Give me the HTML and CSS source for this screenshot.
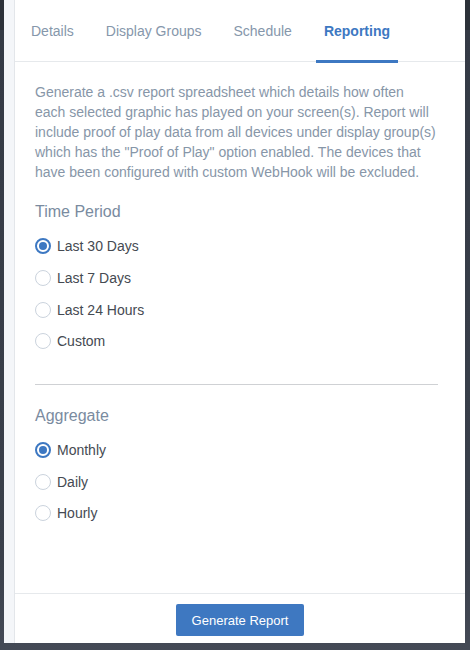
FILE: index.html
```html
<!DOCTYPE html>
<html>
<head>
<meta charset="utf-8">
<link rel="stylesheet" href="styles.css">
</head>
<body>
<div class="stage">
  <div class="panel">
    <div class="strip"></div>
    <div class="main">
      <ul class="tabs">
        <li class="tab">Details</li>
        <li class="tab">Display Groups</li>
        <li class="tab">Schedule</li>
        <li class="tab active">Reporting</li>
      </ul>
      <div class="content">
        <p class="desc">Generate a .csv report spreadsheet which details how often each selected graphic has played on your screen(s). Report will include proof of play data from all devices under display group(s) which has the "Proof of Play" option enabled. The devices that have been configured with custom WebHook will be excluded.</p>
        <h3 class="heading">Time Period</h3>
        <div class="radios">
          <label class="radio"><span class="dot checked"></span>Last 30 Days</label>
          <label class="radio"><span class="dot"></span>Last 7 Days</label>
          <label class="radio"><span class="dot"></span>Last 24 Hours</label>
          <label class="radio"><span class="dot"></span>Custom</label>
        </div>
        <hr class="divider">
        <h3 class="heading">Aggregate</h3>
        <div class="radios">
          <label class="radio"><span class="dot checked"></span>Monthly</label>
          <label class="radio"><span class="dot"></span>Daily</label>
          <label class="radio"><span class="dot"></span>Hourly</label>
        </div>
      </div>
      <div class="footer">
        <button class="btn">Generate Report</button>
      </div>
    </div>
  </div>
</div>
</body>
</html>
```

FILE: styles.css
```css
html, body {
  margin: 0;
  padding: 0;
}
body {
  background: #3b414c;
  font-family: "Liberation Sans", Arial, sans-serif;
  width: 470px;
  height: 650px;
  overflow: hidden;
}
.stage {
  padding: 0 5px 0 4px;
  background: linear-gradient(#2c3139 0, #2c3139 30px, #343a45 30px, #3a404b 560px, #444a56 100%);
  height: 650px;
  box-sizing: border-box;
}
.panel {
  display: flex;
  height: 643px;
  background: #fff;
}
.strip {
  width: 10px;
  background: #f4f6f9;
  border-right: 1px solid #e3e6ea;
  flex: none;
}
.main {
  flex: 1;
  display: flex;
  flex-direction: column;
  min-width: 0;
}
.tabs {
  list-style: none;
  margin: 0;
  padding: 0 0 0 8px;
  display: flex;
  gap: 16px;
  height: 61px;
  border-bottom: 1px solid #e6e9ec;
  flex: none;
}
.tab {
  padding: 0 8px;
  font-size: 14px;
  color: #8697ab;
  line-height: 63px;
  height: 61px;
}
.tab.active {
  color: #3d78c2;
  font-weight: bold;
  border-bottom: 3px solid #3d78c2;
  height: 60px;
  margin-bottom: -2px;
}
.content {
  flex: 1;
  padding: 20px 27px 0 20px;
}
.desc {
  margin: 0;
  font-size: 14px;
  line-height: 20px;
  color: #8796a8;
}
.heading {
  margin: 19px 0 0;
  font-size: 16px;
  line-height: 22px;
  font-weight: normal;
  color: #7a8ba0;
}
.radios {
  margin-top: 7.5px;
  display: flex;
  flex-direction: column;
}
.radio {
  height: 31.7px;
  display: flex;
  align-items: center;
  gap: 6px;
  font-size: 14px;
  color: #454a52;
}
.dot {
  width: 16px;
  height: 16px;
  box-sizing: border-box;
  border-radius: 50%;
  border: 1px solid #cbd3dd;
  background: #fff;
  flex: none;
}
.dot.checked {
  border: 2px solid #3d78c2;
  position: relative;
}
.dot.checked::after {
  content: "";
  position: absolute;
  left: 2px;
  top: 2px;
  width: 8px;
  height: 8px;
  border-radius: 50%;
  background: #3d78c2;
}
.divider {
  margin: 27px 0 0;
  border: 0;
  border-top: 1px solid #cfd1d4;
  height: 0;
}
.content .divider + .heading {
  margin-top: 19.5px;
}
.footer {
  border-top: 1px solid #e6e9ec;
  height: 50px;
  box-sizing: border-box;
  padding-top: 10px;
  display: flex;
  justify-content: center;
  align-items: flex-start;
  flex: none;
}
.btn {
  width: 128px;
  height: 32px;
  border: 0;
  border-radius: 2px;
  background: #3e78c1;
  color: #fff;
  font-family: "Liberation Sans", Arial, sans-serif;
  font-size: 13px;
  padding: 0;
}
```
